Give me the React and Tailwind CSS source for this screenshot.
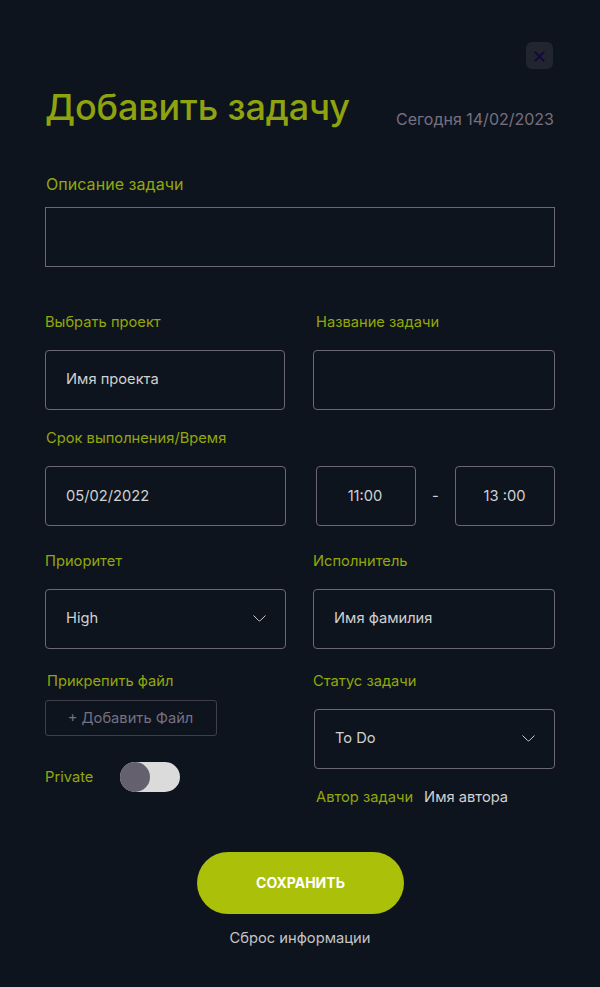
function Label({ children, className = '' }) {
  return <div className={`h-5 whitespace-nowrap text-[14.7px] leading-5 text-[#93a70c] ${className}`}>{children}</div>;
}

function Field({ children, className = '' }) {
  return (
    <div className={`mt-[18px] flex h-[60px] items-center rounded-[4px] border border-[#6c6778] text-[14.7px] leading-5 text-[#d0d1d2] ${className}`}>
      {children}
    </div>
  );
}

function Chevron() {
  return (
    <svg width="13" height="7" viewBox="0 0 13 7" fill="none" stroke="#cdcdce" strokeLinecap="round" strokeLinejoin="round">
      <path d="M0.8 0.8 L5.6 5.5 Q6.5 6.3 7.4 5.5 L12.2 0.8" />
    </svg>
  );
}

export default function App() {
  return (
    <main className="flex h-[987px] w-[600px] flex-col overflow-hidden bg-[#0e141d] px-[45px] font-['Inter',sans-serif]">
      <button className="mt-[42px] mr-[2.5px] flex size-[27px] shrink-0 items-center justify-center self-end rounded-[6px] bg-[#21252f] pt-px">
        <svg width="11" height="11" viewBox="0 0 11 11" fill="none" stroke="#130838" strokeWidth="2" strokeLinecap="round">
          <path d="M1.4 1.4 L9.6 9.6 M9.6 1.4 L1.4 9.6" />
        </svg>
      </button>

      <header className="mt-[14px] flex h-[48px] items-start justify-between">
        <h1 className="text-[36px] leading-[48px] font-medium tracking-[-0.14px] whitespace-nowrap text-[#8fa30e]">Добавить задачу</h1>
        <span className="mt-[24px] mr-px text-[16px] leading-6 whitespace-nowrap text-[#767082]">Сегодня 14/02/2023</span>
      </header>

      <div className="mt-[41px] h-6 pl-px text-[16px] leading-6 tracking-[0.05px] text-[#93a70c]">Описание задачи</div>
      <div className="mt-[11px] h-[60px] shrink-0 border border-[#6c6778]" />

      <div className="mt-[45px] flex justify-between">
        <section className="w-[241px]">
          <Label>Выбрать проект</Label>
          <Field className="mr-px pb-0.5 pl-5">Имя проекта</Field>
          <Label className="mt-[18px] pl-px">Срок выполнения/Время</Label>
          <Field className="pl-5">05/02/2022</Field>
          <Label className="mt-[25px]">Приоритет</Label>
          <Field className="justify-between pr-[19px] pb-0.5 pl-5">
            High
            <Chevron />
          </Field>
          <Label className="mt-[22px] pl-0.5">Прикрепить файл</Label>
          <button className="mt-[9px] flex h-9 w-[172px] items-center justify-center rounded-[3px] border border-[#3f3f4b] pr-px text-[14.7px] leading-5 text-[#767082]">
            + Добавить Файл
          </button>
          <div className="mt-[26px] flex h-[30px] items-center">
            <Label className="w-[75px]">Private</Label>
            <div className="h-[30px] w-[60px] rounded-full bg-[#dbdbdb]">
              <div className="size-[30px] rounded-full bg-[#64606e]" />
            </div>
          </div>
        </section>

        <section className="w-[242px]">
          <Label className="pl-[3px]">Название задачи</Label>
          <Field />
          <div className="mt-[38px] flex items-center justify-between pl-[3px]">
            <Field className="w-[100px] justify-center pr-0.5">11:00</Field>
            <span className="mt-[18px] text-[14.7px] leading-5 text-[#d0d1d2]">-</span>
            <Field className="w-[100px] justify-center pr-px">13 :00</Field>
          </div>
          <Label className="mt-[25px]">Исполнитель</Label>
          <Field className="pb-0.5 pl-5">Имя фамилия</Field>
          <Label className="mt-[22px]">Статус задачи</Label>
          <Field className="ml-px justify-between pr-[19px] pb-0.5 pl-5">
            To Do
            <Chevron />
          </Field>
          <div className="mt-[18px] flex gap-[11px] pl-[3px]">
            <Label>Автор задачи</Label>
            <span className="text-[14.7px] leading-5 whitespace-nowrap text-[#d0d1d2]">Имя автора</span>
          </div>
        </section>
      </div>

      <button className="mt-[45px] ml-[152px] h-[62px] w-[207px] shrink-0 rounded-full bg-[#abc008] pb-0.5 text-[14px] font-bold text-white">
        СОХРАНИТЬ
      </button>
      <button className="mt-[14px] text-center text-[14.7px] leading-5 text-[#c4c5c7]">Сброс информации</button>
    </main>
  );
}
